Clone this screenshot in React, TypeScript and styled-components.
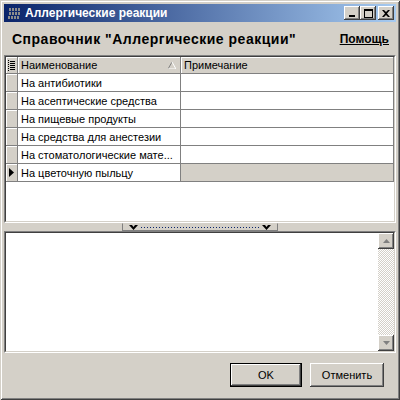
import styled, { createGlobalStyle } from "styled-components"

const GlobalStyle = createGlobalStyle`
  html, body {
    margin: 0;
    padding: 0;
    background: #d4d0c8;
  }
  body {
    font-family: "Liberation Sans", Arial, sans-serif;
  }
`

const Frame = styled.div`
  width: 400px;
  height: 400px;
  box-sizing: border-box;
  background: #d4d0c8;
  padding: 4px;
  display: flex;
  flex-direction: column;
  box-shadow: inset 1px 1px #d4d0c8, inset -1px -1px #404040,
    inset 2px 2px #ffffff, inset -2px -2px #808080;
`

const TitleBar = styled.div`
  height: 18px;
  flex: none;
  display: flex;
  align-items: center;
  gap: 4px;
  padding: 0 2px 0 4px;
  background: linear-gradient(to right, #0a246a, #a6caf0);
  color: #fff;
  font-weight: bold;
  font-size: 12px;
`

const TitleText = styled.span`
  flex: 1;
  white-space: nowrap;
`

const CaptionButtons = styled.div`
  display: flex;
  gap: 2px;
`

const CaptionPair = styled.div`
  display: flex;
`

const CaptionButton = styled.div`
  width: 16px;
  height: 14px;
  box-sizing: border-box;
  background: #d4d0c8;
  display: flex;
  align-items: center;
  justify-content: center;
  box-shadow: inset -1px -1px #404040, inset 1px 1px #ffffff,
    inset -2px -2px #808080, inset 2px 2px #d4d0c8;
`

const Header = styled.div`
  height: 33px;
  flex: none;
  display: flex;
  align-items: center;
  justify-content: space-between;
  padding: 0 7px 0 8px;
`

const Heading = styled.h1`
  margin: 0;
  font-size: 14px;
  font-weight: bold;
  letter-spacing: 0.5px;
  color: #000;
  white-space: nowrap;
`

const HelpLink = styled.a`
  font-size: 12px;
  font-weight: bold;
  color: #000;
  text-decoration: underline;
`

const Sunken = styled.div<{ $height: number }>`
  height: ${(p) => p.$height}px;
  flex: none;
  box-sizing: border-box;
  border: 1px solid;
  border-color: #808080 #ffffff #ffffff #808080;
  background: #fff;
`

const SunkenInner = styled.div`
  height: 100%;
  box-sizing: border-box;
  border: 1px solid;
  border-color: #404040 #d4d0c8 #d4d0c8 #404040;
  display: flex;
`

const Table = styled.div`
  display: grid;
  grid-template-columns: 12px 163px 213px;
  grid-auto-rows: 18px;
  grid-template-rows: 17px;
  align-content: start;
  font-size: 11px;
  color: #000;
`

const HeadCell = styled.div`
  background: #d4d0c8;
  box-sizing: border-box;
  border-right: 1px solid #808080;
  border-bottom: 1px solid #808080;
  box-shadow: inset 1px 1px #ffffff;
  display: flex;
  align-items: center;
  padding: 0 4px 0 3px;
  white-space: nowrap;
`

const HeadLabel = styled.span`
  flex: 1;
`

const IndicatorCell = styled.div`
  background: #d4d0c8;
  box-sizing: border-box;
  border-right: 1px solid #808080;
  border-bottom: 1px solid #808080;
  box-shadow: inset 1px 1px #ffffff;
  display: flex;
  align-items: center;
  justify-content: center;
`

const Cell = styled.div<{ $shaded?: boolean }>`
  background: ${(p) => (p.$shaded ? "#d4d0c8" : "#ffffff")};
  box-sizing: border-box;
  border-right: 1px solid #808080;
  border-bottom: 1px solid #808080;
  display: flex;
  align-items: center;
  padding: 0 3px;
  white-space: nowrap;
  overflow: hidden;
`

const Splitter = styled.div`
  height: 8px;
  flex: none;
  display: flex;
  justify-content: center;
`

const SplitterGrip = styled.div`
  width: 156px;
  height: 8px;
  box-sizing: border-box;
  border: 1px solid #808080;
  border-top-color: #d4d0c8;
  display: flex;
  align-items: center;
  gap: 3px;
  padding: 0 6px;
`

const DottedLine = styled.div`
  flex: 1;
  height: 1px;
  background: repeating-linear-gradient(to right, #0a246a 0 1px, transparent 1px 3px);
`

const MemoArea = styled.div`
  flex: 1;
`

const ScrollBar = styled.div`
  width: 16px;
  display: flex;
  flex-direction: column;
  background: repeating-conic-gradient(#ffffff 0 25%, #d4d0c8 0 50%) 0 0 / 2px 2px;
`

const ScrollTrack = styled.div`
  flex: 1;
`

const ScrollButton = styled.div`
  height: 16px;
  box-sizing: border-box;
  background: #d4d0c8;
  display: flex;
  align-items: center;
  justify-content: center;
  box-shadow: inset -1px -1px #404040, inset 1px 1px #ffffff,
    inset -2px -2px #808080, inset 2px 2px #d4d0c8;
`

const Footer = styled.div`
  flex: 1;
  display: flex;
  align-items: center;
  justify-content: flex-end;
  gap: 8px;
  padding-right: 12px;
`

const PushButton = styled.button<{ $default?: boolean; $width: number }>`
  width: ${(p) => p.$width}px;
  height: 24px;
  font-family: "Liberation Sans", Arial, sans-serif;
  font-size: 11px;
  color: #000;
  background: #d4d0c8;
  padding: 0;
  border: ${(p) => (p.$default ? "1px solid #000" : "none")};
  box-shadow: inset -1px -1px #404040, inset 1px 1px #ffffff,
    inset -2px -2px #808080, inset 2px 2px #d4d0c8;
`

const AppIcon = () => (
  <svg width="13" height="11" viewBox="0 0 13 11">
    {[0, 1, 2].map((r) =>
      [0, 1, 2, 3].map((c) => (
        <rect key={`${r}-${c}`} x={c * 3 + (r === 2 ? 0 : 1)} y={r * 4} width="2" height="3" fill="#8c8c8c" />
      ))
    )}
  </svg>
)

const MinGlyph = () => (
  <svg width="8" height="7" viewBox="0 0 8 7">
    <rect x="1" y="5" width="6" height="2" fill="#000" />
  </svg>
)

const MaxGlyph = () => (
  <svg width="9" height="9" viewBox="0 0 9 9">
    <path d="M0 0H9V9H0Z M1 2V8H8V2Z" fill="#000" fillRule="evenodd" />
  </svg>
)

const CloseGlyph = () => (
  <svg width="8" height="7" viewBox="0 0 8 7">
    <path d="M0 0H2L4 2L6 0H8L5 3.5L8 7H6L4 5L2 7H0L3 3.5Z" fill="#000" />
  </svg>
)

const ListGlyph = () => (
  <svg width="7" height="11" viewBox="0 0 7 11">
    {[0, 2, 4, 6, 8, 10].map((y) => (
      <rect key={y} x="0" y={y} width="1" height="1" fill="#000" />
    ))}
    {[1, 3, 5, 7, 9].map((y) => (
      <rect key={y} x="2" y={y} width="5" height="1" fill="#000" />
    ))}
  </svg>
)

const SortGlyph = () => (
  <svg width="8" height="7" viewBox="0 0 8 7">
    <path d="M4 0L0 7" stroke="#808080" strokeWidth="1" />
    <path d="M4 0L8 7H0" stroke="#ffffff" strokeWidth="1" fill="none" />
  </svg>
)

const RowPointer = () => (
  <svg width="5" height="9" viewBox="0 0 5 9">
    <path d="M0 0L5 4.5L0 9Z" fill="#000" />
  </svg>
)

const Chevron = () => (
  <svg width="9" height="5" viewBox="0 0 9 5">
    <path d="M0 0H3L4.5 2L6 0H9L4.5 5Z" fill="#000" />
  </svg>
)

const ArrowGlyph = ({ down }: { down?: boolean }) => (
  <svg width="7" height="4" viewBox="0 0 7 4">
    <path d={down ? "M0 0H7L3.5 4Z" : "M3.5 0L7 4H0Z"} fill="#808080" />
  </svg>
)

const rows = [
  "На антибиотики",
  "На асептические средства",
  "На пищевые продукты",
  "На средства для анестезии",
  "На стоматологические мате...",
  "На цветочную пыльцу",
]

const App = () => {
  return (
    <>
      <GlobalStyle />
      <Frame>
        <TitleBar>
          <AppIcon />
          <TitleText>Аллергические реакции</TitleText>
          <CaptionButtons>
            <CaptionPair>
              <CaptionButton><MinGlyph /></CaptionButton>
              <CaptionButton><MaxGlyph /></CaptionButton>
            </CaptionPair>
            <CaptionButton><CloseGlyph /></CaptionButton>
          </CaptionButtons>
        </TitleBar>

        <Header>
          <Heading>Справочник "Аллергические реакции"</Heading>
          <HelpLink>Помощь</HelpLink>
        </Header>

        <Sunken $height={168}>
          <SunkenInner>
            <Table>
              <IndicatorCell><ListGlyph /></IndicatorCell>
              <HeadCell>
                <HeadLabel>Наименование</HeadLabel>
                <SortGlyph />
              </HeadCell>
              <HeadCell>Примечание</HeadCell>
              {rows.map((name, index) => {
                const current = index === rows.length - 1
                return [
                  <IndicatorCell key={`i${index}`}>{current && <RowPointer />}</IndicatorCell>,
                  <Cell key={`n${index}`}>{name}</Cell>,
                  <Cell key={`c${index}`} $shaded={current} />,
                ]
              })}
            </Table>
          </SunkenInner>
        </Sunken>

        <Splitter>
          <SplitterGrip>
            <Chevron />
            <DottedLine />
            <Chevron />
          </SplitterGrip>
        </Splitter>

        <Sunken $height={122}>
          <SunkenInner>
            <MemoArea />
            <ScrollBar>
              <ScrollButton><ArrowGlyph /></ScrollButton>
              <ScrollTrack />
              <ScrollButton><ArrowGlyph down /></ScrollButton>
            </ScrollBar>
          </SunkenInner>
        </Sunken>

        <Footer>
          <PushButton $default $width={72}>OK</PushButton>
          <PushButton $width={74}>Отменить</PushButton>
        </Footer>
      </Frame>
    </>
  )
}

export default App
